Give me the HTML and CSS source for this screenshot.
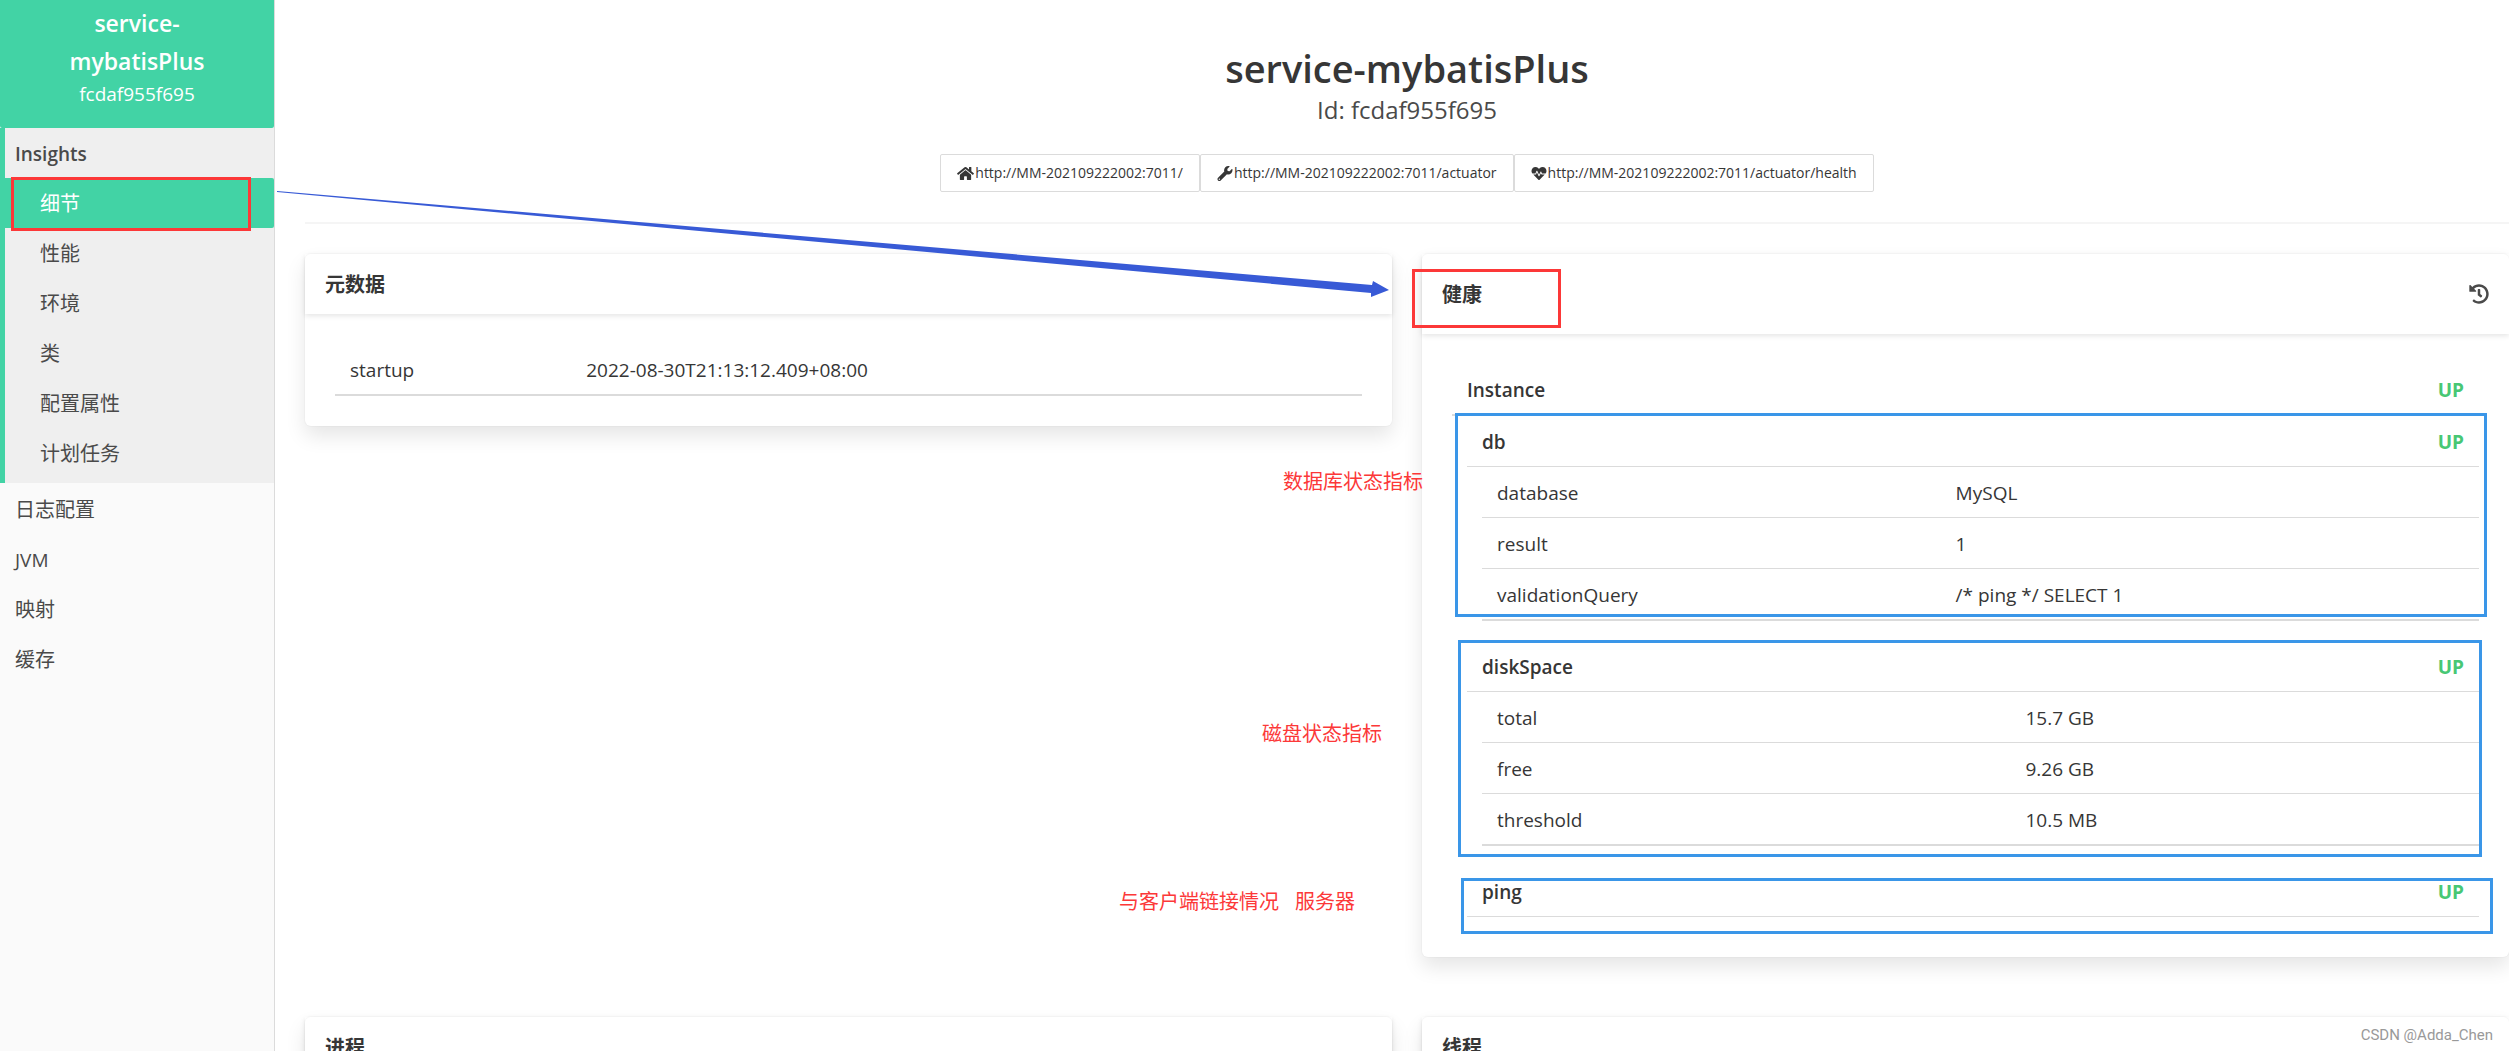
FILE: index.html
```html
<!DOCTYPE html>
<html lang="zh-CN">
<head>
<meta charset="utf-8">
<title>service-mybatisPlus</title>
<link rel="stylesheet" href="styles.css">
</head>
<body>
<div class="app">
  <aside class="sidebar">
    <a class="instance" href="#">
      <span class="instance-name">service-<br>mybatisPlus</span>
      <span class="instance-id">fcdaf955f695</span>
    </a>
    <nav>
      <div class="group">
        <a class="item latin strong" href="#">Insights</a>
        <a class="item sub active" href="#">细节</a>
        <a class="item sub" href="#">性能</a>
        <a class="item sub" href="#">环境</a>
        <a class="item sub" href="#">类</a>
        <a class="item sub" href="#">配置属性</a>
        <a class="item sub" href="#">计划任务</a>
      </div>
      <a class="item" href="#">日志配置</a>
      <a class="item latin" href="#">JVM</a>
      <a class="item" href="#">映射</a>
      <a class="item" href="#">缓存</a>
    </nav>
  </aside>

  <main class="main">
    <header class="hero">
      <h1>service-mybatisPlus</h1>
      <p class="subtitle">Id: fcdaf955f695</p>
      <div class="links">
        <a href="#"><svg class="icon home" viewBox="0 0 576 512"><path d="M280.37 148.26L96 300.11V464a16 16 0 0 0 16 16l112.06-.29a16 16 0 0 0 15.92-16V368a16 16 0 0 1 16-16h64a16 16 0 0 1 16 16v95.64a16 16 0 0 0 16 16.05L464 480a16 16 0 0 0 16-16V300L295.67 148.26a12.19 12.19 0 0 0-15.3 0zM571.6 251.47L488 182.56V44.05a12 12 0 0 0-12-12h-56a12 12 0 0 0-12 12v72.61L318.47 43a48 48 0 0 0-61 0L4.34 251.47a12 12 0 0 0-1.6 16.9l25.5 31A12 12 0 0 0 45.15 301l235.22-193.74a12.19 12.19 0 0 1 15.3 0L530.9 301a12 12 0 0 0 16.9-1.6l25.5-31a12 12 0 0 0-1.7-16.93z"/></svg>http://MM-202109222002:7011/</a>
        <a href="#"><svg class="icon" viewBox="0 0 512 512"><path d="M507.73 109.1c-2.24-9.03-13.54-12.09-20.12-5.51l-74.36 74.36-67.88-11.31-11.31-67.88 74.36-74.36c6.62-6.62 3.43-17.9-5.66-20.16-47.38-11.74-99.55.91-136.58 37.93-39.64 39.64-50.55 97.1-34.05 147.2L18.74 402.76c-24.99 24.99-24.99 65.51 0 90.5 24.99 24.99 65.51 24.99 90.5 0l213.21-213.21c50.12 16.71 107.47 5.68 147.37-34.22 37.07-37.07 49.7-89.32 37.91-136.73zM64 472c-13.25 0-24-10.75-24-24 0-13.26 10.75-24 24-24s24 10.74 24 24c0 13.25-10.75 24-24 24z"/></svg>http://MM-202109222002:7011/actuator</a>
        <a href="#"><svg class="icon" viewBox="0 0 512 512"><path d="M320.2 243.8l-49.7 99.4c-6 12.1-23.4 11.7-28.9-.6l-56.9-126.3-30 71.7H60.6l182.5 186.5c7.1 7.3 18.6 7.3 25.7 0L451.4 288H342.3l-22.1-44.2zM473.7 73.9l-2.4-2.5c-51.5-52.6-135.8-52.6-187.4 0L256 100l-27.9-28.5c-51.5-52.7-135.9-52.7-187.4 0l-2.4 2.4C-10.4 123.7-12.5 203 31 256h102.4l35.9-86.2c5.4-12.9 23.6-13.2 29.4-.4l58.2 129.3 49-97.9c5.9-11.8 22.7-11.8 28.6 0l27.6 55.2H481c43.5-53 41.4-132.3-7.3-182.1z"/></svg>http://MM-202109222002:7011/actuator/health</a>
      </div>
    </header>
    <hr>
    <div class="cards">
      <section class="card">
        <header class="card-header"><h2>元数据</h2></header>
        <div class="card-body">
          <table class="details meta">
            <tr><th scope="row">startup</th><td>2022-08-30T21:13:12.409+08:00</td></tr>
          </table>
        </div>
      </section>

      <section class="card">
        <header class="card-header tall">
          <h2>健康</h2>
          <button type="button" class="history" aria-label="history"><svg viewBox="0 0 512 512"><path d="M504 255.531c.253 136.64-111.18 248.372-247.82 248.468-59.015.042-113.223-20.53-155.822-54.911-11.077-8.94-11.905-25.541-1.839-35.607l11.267-11.267c8.609-8.609 22.353-9.551 31.891-1.984C173.062 425.135 212.781 440 256 440c101.705 0 184-82.311 184-184 0-101.705-82.311-184-184-184-48.814 0-93.149 18.969-126.068 49.932l50.754 50.754c10.08 10.08 2.941 27.314-11.313 27.314H24c-8.837 0-16-7.163-16-16V38.627c0-14.254 17.234-21.393 27.314-11.314l49.372 49.372C129.209 34.136 189.552 8 256 8c136.81 0 247.747 110.78 248 247.531zm-180.912 78.784l9.823-12.63c8.138-10.463 6.253-25.542-4.21-33.679L288 256.349V152c0-13.255-10.745-24-24-24h-16c-13.255 0-24 10.745-24 24v135.651l65.409 50.874c10.463 8.137 25.541 6.253 33.679-4.21z"/></svg></button>
        </header>
        <div class="card-body">
          <div class="status root"><span>Instance</span><span class="up">UP</span></div>
          <div class="component">
            <div class="status"><span>db</span><span class="up">UP</span></div>
            <table class="details db">
              <tr><th scope="row">database</th><td>MySQL</td></tr>
              <tr><th scope="row">result</th><td>1</td></tr>
              <tr><th scope="row">validationQuery</th><td>/* ping */ SELECT 1</td></tr>
            </table>
          </div>
          <div class="component">
            <div class="status"><span>diskSpace</span><span class="up">UP</span></div>
            <table class="details disk">
              <tr><th scope="row">total</th><td>15.7 GB</td></tr>
              <tr><th scope="row">free</th><td>9.26 GB</td></tr>
              <tr><th scope="row">threshold</th><td>10.5 MB</td></tr>
            </table>
          </div>
          <div class="component">
            <div class="status"><span>ping</span><span class="up">UP</span></div>
          </div>
        </div>
      </section>

      <section class="card">
        <header class="card-header"><h2>进程</h2></header>
        <div class="card-body"></div>
      </section>
      <section class="card">
        <header class="card-header"><h2>线程</h2></header>
        <div class="card-body"></div>
      </section>
    </div>
  </main>
</div>

<div class="notes">
  <svg class="arrow" viewBox="0 0 1112 110"><path d="M0 0L1095 94L1096 90L1112 99L1094 106L1094 102L0 1Z"/></svg>
  <div class="box red menu-box"></div>
  <div class="box red health-box"></div>
  <div class="box blue db-box"></div>
  <div class="box blue disk-box"></div>
  <div class="box blue ping-box"></div>
  <p class="note db-note">数据库状态指标</p>
  <p class="note disk-note">磁盘状态指标</p>
  <p class="note ping-note"><span>与客户端链接情况</span><span>服务器</span></p>
  <p class="watermark">CSDN @Adda_Chen</p>
</div>
</body>
</html>
```

FILE: styles.css
```css
* {
  box-sizing: border-box;
}

body {
  margin: 0;
  background: #fff;
  color: #363636;
  font: 19px/30px "Open Sans", "Noto Sans CJK SC", sans-serif;
}

a {
  color: inherit;
  text-decoration: none;
}

h1,
h2,
p {
  margin: 0;
}

.app {
  display: flex;
  height: 100vh;
  overflow: hidden;
}

/* Sidebar */
.sidebar {
  flex: none;
  width: 275px;
  border-right: 1px solid #dbdbdb;
  background: #fafafa;
  color: #4a4a4a;
}

.instance {
  display: flex;
  flex-direction: column;
  align-items: center;
  height: 128px;
  padding-top: 4px;
  border-radius: 0 0 2px 2px;
  background: #42d3a5;
  color: #fff;
  text-align: center;
}

.instance-name {
  font-size: 23px;
  font-weight: 600;
  line-height: 38px;
}

.instance-id {
  line-height: 28px;
}

.group {
  margin-bottom: 1px;
  padding-bottom: 5px;
  border-left: 5px solid #42d3a5;
  background: #efefef;
}

.item {
  display: block;
  padding: 11px 15px 9px;
  font-size: 20px;
}

.group .item {
  padding-left: 10px;
}

.group .sub {
  padding-left: 35px;
}

.latin {
  font-size: 19px;
}

.strong {
  font-weight: 600;
}

.active {
  border-radius: 0 2px 2px 0;
  background: #42d3a5;
  color: #fff;
}

/* Header */
.main {
  flex: 1;
  min-width: 0;
  padding: 42px 0 0 30px;
}

.hero {
  display: flex;
  flex-direction: column;
  align-items: center;
}

h1 {
  font-size: 38px;
  font-weight: 600;
  line-height: 52px;
}

.subtitle {
  color: #4a4a4a;
  font-size: 24px;
  line-height: 32px;
}

.links {
  display: flex;
  margin: 28px 0 30px;
}

.links a {
  display: flex;
  gap: 1px;
  align-items: center;
  height: 38px;
  padding: 0 16px;
  border: 1px solid #dbdbdb;
  border-radius: 2px;
  font-size: 14px;
}

.icon {
  width: 16px;
  height: 15px;
  fill: currentColor;
}

.home {
  width: 17px;
}

hr {
  height: 2px;
  margin: 0 0 30px;
  border: 0;
  background: #f5f5f5;
}

/* Cards */
.cards {
  display: grid;
  grid-template-columns: 1fr 1fr;
  align-items: start;
  gap: 60px 30px;
}

.card {
  border-radius: 6px;
  background: #fff;
  box-shadow: 0 10px 20px rgba(10, 10, 10, .1), 0 0 0 1px rgba(10, 10, 10, .02);
}

.card-header {
  display: flex;
  align-items: center;
  justify-content: space-between;
  height: 60px;
  padding: 0 20px;
  box-shadow: 0 2px 5px rgba(10, 10, 10, .1);
}

.tall {
  height: 80px;
}

h2 {
  padding-top: 2px;
  font-size: 20px;
  font-weight: 700;
  line-height: 30px;
}

.history {
  display: flex;
  padding: 0;
  border: 0;
  background: none;
  color: #4a4a4a;
}

.history svg {
  width: 20px;
  height: 24px;
  fill: currentColor;
}

.card-body {
  padding: 30px;
}

.status {
  display: flex;
  justify-content: space-between;
  padding: 11px 15px 9px;
  border-bottom: 1px solid #dbdbdb;
  font-weight: 600;
}

.root {
  border-bottom-width: 2px;
}

.up {
  color: #48c774;
  font-weight: 700;
}

.component {
  padding-left: 15px;
}

.component + .component {
  margin-top: 20px;
}

.component:last-child {
  padding-bottom: 10px;
}

.details {
  width: 100%;
  border-spacing: 0;
  table-layout: fixed;
}

.component .details {
  width: calc(100% - 15px);
  margin-left: 15px;
}

th,
td {
  padding: 11px 15px 9px;
  border-bottom: 1px solid #dbdbdb;
  font-weight: 400;
  text-align: left;
}

tr:last-child > * {
  border-bottom-width: 2px;
}

.meta th {
  width: 23%;
}

.db th {
  width: 46%;
}

.disk th {
  width: 53%;
}

/* Hand-drawn notes laid over the page */
.notes > * {
  position: absolute;
}

.arrow {
  left: 277px;
  top: 191px;
  width: 1112px;
  height: 110px;
  fill: #385ad6;
}

.box {
  border: 3px solid;
}

.red {
  border-color: #fc3838;
}

.blue {
  border-color: #3a96e8;
}

.menu-box {
  left: 11px;
  top: 177px;
  width: 240px;
  height: 54px;
}

.health-box {
  left: 1412px;
  top: 269px;
  width: 149px;
  height: 59px;
}

.db-box {
  left: 1455px;
  top: 413px;
  width: 1032px;
  height: 204px;
}

.disk-box {
  left: 1458px;
  top: 640px;
  width: 1024px;
  height: 217px;
}

.ping-box {
  left: 1461px;
  top: 878px;
  width: 1032px;
  height: 56px;
}

.note {
  color: #fc3838;
  font-size: 20px;
  white-space: nowrap;
}

.db-note {
  left: 1283px;
  top: 467px;
}

.disk-note {
  left: 1262px;
  top: 719px;
}

.ping-note {
  display: flex;
  gap: 16px;
  left: 1119px;
  top: 887px;
}

.watermark {
  right: 16px;
  bottom: 0;
  color: #999;
  font: 15px/32px Roboto, "Liberation Sans", sans-serif;
}
```
